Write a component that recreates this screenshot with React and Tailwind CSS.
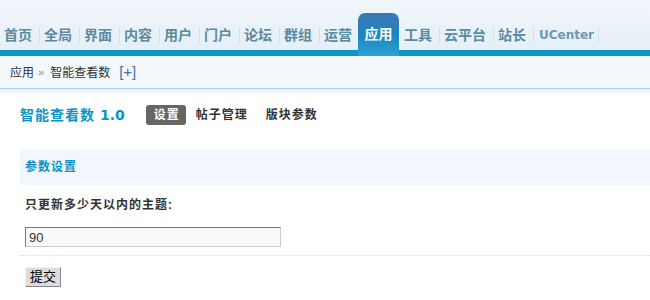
import React from 'react';

const navItems = ['首页', '全局', '界面', '内容', '用户', '门户', '论坛', '群组', '运营', '应用', '工具', '云平台', '站长', 'UCenter'];

const cjk = { fontFamily: '"Liberation Sans", "Noto Sans CJK SC", sans-serif' };

function Header() {
  return (
    <div className="h-[50px] bg-gradient-to-b from-[#f1f7fc] to-[#e5eff7] flex items-end">
      <ul className="flex items-end h-[37px]">
        {navItems.map((item) => {
          const active = item === '应用';
          if (active) {
            return (
              <li key={item} className="relative h-[37px] w-[40px]">
                <div className="absolute left-[-2px] top-0 w-[41px] h-[43px] rounded-t-[7px] bg-gradient-to-b from-[#3a78b4] via-[#1a86bf] to-[#2aa2d2] flex items-center justify-center text-white text-[14px] font-bold">
                  {item}
                </div>
              </li>
            );
          }
          return (
            <li key={item} className="flex items-center h-[37px] pt-[6px]">
              {item === 'UCenter' ? (
                <span className="pl-[5px] pr-[4px] text-[12px] font-bold text-[#6b9ab3] leading-[18px] font-['DejaVu_Sans']">
                  {item}
                </span>
              ) : (
                <span className="pl-[4px] pr-[7px] text-[14px] font-bold text-[#5b8aa1] leading-[18px]">
                  {item}
                </span>
              )}
              <span className="w-px h-[16px] bg-[#d2e2ec]" />
            </li>
          );
        })}
      </ul>
    </div>
  );
}

function Breadcrumb() {
  return (
    <div>
      <div className="h-[6px] bg-[#0a97c8]" />
      <div className="h-[32px] bg-[#f3f8fc] border-t border-[#fafcfe] flex items-center pl-[10px] text-[12px] text-[#333]">
        <span>应用</span>
        <span className="ml-[4px] mr-[6px] text-[#888] text-[11px]">»</span>
        <span>智能查看数</span>
        <span className="ml-[9px] text-[#4a6cb3] text-[15px]">[+]</span>
      </div>
      <div className="h-px bg-[#b6cee0]" />
      <div className="h-[8px] bg-gradient-to-b from-[#e6f0f8] to-white" />
    </div>
  );
}

export default function App() {
  return (
    <div className="w-[650px] h-[300px] overflow-hidden bg-white" style={cjk}>
      <Header />
      <Breadcrumb />
      <div className="pl-[20px]">
        <div className="flex items-center h-[36px]">
          <h3 className="text-[14px] font-bold text-[#0a93c4] mr-[21px] tracking-[1px]">
            智能查看数 <span className="font-['DejaVu_Sans'] tracking-normal">1.0</span>
          </h3>
          <ul className="flex items-center text-[12px] font-bold text-[#333] tracking-[1px]">
            <li className="bg-[#666] text-white rounded-[3px] pl-[8px] pr-[6px] h-[20px] leading-[20px] mr-[10px]">设置</li>
            <li className="mr-[18px]">帖子管理</li>
            <li>版块参数</li>
          </ul>
        </div>
        <div className="h-[36px] mt-[16px] bg-[#f2f7fd] flex items-center pl-[5px] text-[12px] font-bold text-[#0a93c4] tracking-[1px]">
          参数设置
        </div>
        <div className="pl-[5px] h-[40px] flex items-center text-[12px] font-bold text-[#333] tracking-[1px]">
          只更新多少天以内的主题:
        </div>
        <div className="pl-[5px] pt-[2px] pb-[8px] border-b border-dotted border-[#ddd]">
          <input
            type="text"
            defaultValue="90"
            className="block w-[256px] h-[20px] bg-[#f9f9f9] border border-t-[#777] border-l-[#777] border-b-[#ccc] border-r-[#ccc] pl-[3px] text-[13px] text-[#333] outline-none"
          />
        </div>
        <div className="pl-[5px] pt-[8px]">
          <button className="w-[36px] h-[20px] bg-[#dcdcdc] border border-t-[#f4f4f4] border-l-[#f4f4f4] border-b-[#888] border-r-[#888] text-[13px] text-black leading-[18px]">
            提交
          </button>
        </div>
      </div>
    </div>
  );
}
